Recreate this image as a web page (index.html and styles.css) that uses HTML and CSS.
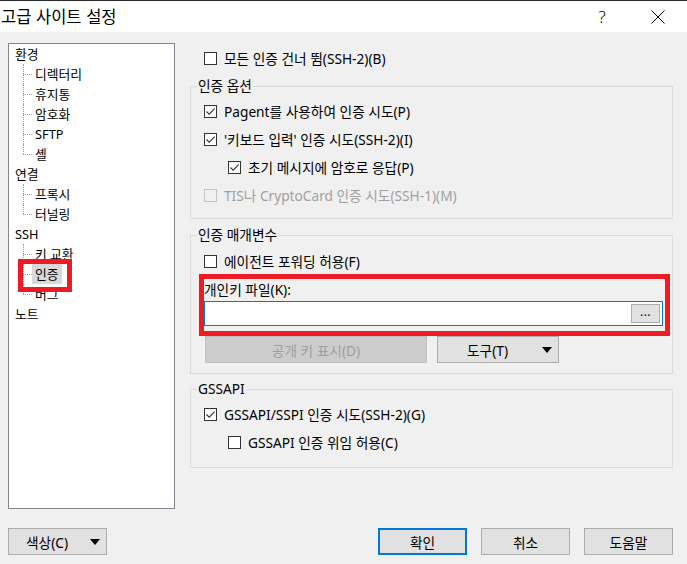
FILE: index.html
```html
<!DOCTYPE html>
<html lang="ko">
<head>
<meta charset="utf-8">
<title>고급 사이트 설정</title>
<link rel="stylesheet" href="styles.css">
</head>
<body>
<div class="window">
  <div class="titlebar">
    <span class="title">고급 사이트 설정</span>
    <span class="help">?</span>
    <svg class="close" width="14" height="14" viewBox="0 0 14 14"><path d="M0.5 0.5 L13.5 13.5 M13.5 0.5 L0.5 13.5" stroke="#000" stroke-width="1" fill="none"/></svg>
  </div>

  <div class="content">
    <div class="tree">
      <div class="node">환경</div>
      <div class="node child">디렉터리</div>
      <div class="node child">휴지통</div>
      <div class="node child">암호화</div>
      <div class="node child">SFTP</div>
      <div class="node child last">셸</div>
      <div class="node">연결</div>
      <div class="node child">프록시</div>
      <div class="node child last">터널링</div>
      <div class="node">SSH</div>
      <div class="node child">키 교환</div>
      <div class="node child"><span class="sel">인증</span></div>
      <div class="node child last">버그</div>
      <div class="node">노트</div>
    </div>

    <div class="panel">
      <div class="cb-row top">
        <span class="box"></span><span>모든 인증 건너 뜀(SSH-2)(B)</span>
      </div>

      <fieldset class="group g1">
        <legend>인증 옵션</legend>
        <div class="group-body">
          <div class="cb-row"><span class="box"><svg viewBox="0 0 11 11" width="11" height="11"><path d="M1.5 5.5 L4.2 8.2 L9.6 2.6" stroke="#333" stroke-width="1.1" fill="none"/></svg></span><span>Pagent를 사용하여 인증 시도(P)</span></div>
          <div class="cb-row"><span class="box"><svg viewBox="0 0 11 11" width="11" height="11"><path d="M1.5 5.5 L4.2 8.2 L9.6 2.6" stroke="#333" stroke-width="1.1" fill="none"/></svg></span><span>'키보드 입력' 인증 시도(SSH-2)(I)</span></div>
          <div class="cb-row indent"><span class="box"><svg viewBox="0 0 11 11" width="11" height="11"><path d="M1.5 5.5 L4.2 8.2 L9.6 2.6" stroke="#333" stroke-width="1.1" fill="none"/></svg></span><span>초기 메시지에 암호로 응답(P)</span></div>
          <div class="cb-row disabled"><span class="box"></span><span>TIS나 CryptoCard 인증 시도(SSH-1)(M)</span></div>
        </div>
      </fieldset>

      <fieldset class="group g2">
        <legend>인증 매개변수</legend>
        <div class="group-body">
          <div class="cb-row"><span class="box"></span><span>에이전트 포워딩 허용(F)</span></div>
          <div class="field-label">개인키 파일(K):</div>
          <div class="input">
            <span class="browse">...</span>
          </div>
          <div class="btn-row">
            <span class="btn disabled-btn wide">공개 키 표시(D)</span>
            <span class="btn drop tools"><span class="btn-text">도구(T)</span><svg class="arrow" width="10" height="6" viewBox="0 0 10 6"><path d="M0 0 H10 L5 6 Z" fill="#000"/></svg></span>
          </div>
        </div>
      </fieldset>

      <fieldset class="group g3">
        <legend>GSSAPI</legend>
        <div class="group-body">
          <div class="cb-row"><span class="box"><svg viewBox="0 0 11 11" width="11" height="11"><path d="M1.5 5.5 L4.2 8.2 L9.6 2.6" stroke="#333" stroke-width="1.1" fill="none"/></svg></span><span>GSSAPI/SSPI 인증 시도(SSH-2)(G)</span></div>
          <div class="cb-row indent"><span class="box"></span><span>GSSAPI 인증 위임 허용(C)</span></div>
        </div>
      </fieldset>
    </div>
  </div>

  <div class="footer">
    <span class="btn drop color"><span class="btn-text">색상(C)</span><svg class="arrow" width="10" height="6" viewBox="0 0 10 6"><path d="M0 0 H10 L5 6 Z" fill="#000"/></svg></span>
    <span class="btn ok">확인</span>
    <span class="btn">취소</span>
    <span class="btn">도움말</span>
  </div>

  <div class="mark mark-tree"></div>
  <div class="mark mark-key"></div>
</div>
</body>
</html>
```

FILE: styles.css
```css
* { box-sizing: border-box; }
html, body { margin: 0; padding: 0; }
body {
  width: 687px;
  height: 564px;
  overflow: hidden;
  background: #f0f0f0;
  font-family: "Noto Sans", "Noto Sans CJK KR", sans-serif;
  font-size: 13.7px;
  color: #000;
}
.window {
  position: relative;
  width: 687px;
  height: 564px;
  border-top: 1px solid #2a2a2a;
}
.titlebar {
  height: 31px;
  background: #fff;
  display: flex;
  align-items: center;
}
.title {
  font-family: "Noto Sans CJK KR", sans-serif;
  font-size: 16.5px;
  line-height: 31px;
  margin-left: 1px;
  flex: 1;
}
.help {
  width: 20px;
  text-align: center;
  font-family: "Noto Sans", sans-serif;
  font-size: 17px;
  font-weight: 300;
  line-height: 31px;
}
.close {
  margin-left: 39px;
  margin-right: 22px;
  display: block;
}

.content {
  display: flex;
  gap: 15px;
  margin-top: 11px;
  padding-left: 8px;
  height: 466px;
}
.tree {
  width: 167px;
  height: 466px;
  border: 1px solid #828790;
  background: #fff;
  font-size: 12.8px;
}
.node {
  height: 20px;
  line-height: 20px;
  padding-left: 6px;
  white-space: nowrap;
}
.child {
  position: relative;
  padding-left: 26px;
}
.child::before {
  content: "";
  position: absolute;
  left: 14px;
  top: 0;
  height: 20px;
  border-left: 1px dotted #a0a0a0;
}
.child.last::before { height: 10px; }
.child::after {
  content: "";
  position: absolute;
  left: 14px;
  top: 10px;
  width: 9px;
  border-top: 1px dotted #a0a0a0;
}
.sel {
  display: inline-block;
  background: #d9d9d9;
  height: 20px;
  padding: 0 3px;
  margin-left: -3px;
}

.panel {
  width: 483px;
  display: flex;
  flex-direction: column;
}
.cb-row {
  display: flex;
  align-items: center;
  gap: 7px;
  height: 28px;
  white-space: nowrap;
}
.cb-row.top {
  height: 20px;
  margin-top: 5px;
  padding-left: 14px;
}
.cb-row.indent { padding-left: 24px; }
.box {
  width: 13px;
  height: 13px;
  flex: none;
  border: 1px solid #333;
  background: #fff;
  display: flex;
  align-items: center;
  justify-content: center;
}
.box svg { display: block; }
.cb-row.disabled { color: #a0a0a0; }
.cb-row.disabled .box { border-color: #c4c4c4; background: transparent; }

.group {
  margin: 0;
  padding: 0;
  border: 1px solid #dcdcdc;
  min-width: 0;
}
.group legend {
  margin-left: 6px;
  padding: 0 1px;
  line-height: 16px;
  height: 16px;
}
.group-body { padding-left: 13px; }
.g1 { margin-top: 10px; }
.g1 .group-body { padding-top: 3px; padding-bottom: 9px; }
.g2 { margin-top: 8px; }
.g2 .group-body { padding-top: 4px; padding-bottom: 10px; }
.g3 { margin-top: 7px; }
.g3 .group-body { padding-top: 3px; padding-bottom: 11px; }

.field-label {
  margin-top: 7px;
  height: 16px;
  line-height: 16px;
}
.input {
  margin-top: 3px;
  width: 459px;
  height: 25px;
  border: 1px solid #0078d7;
  background: #fff;
  display: flex;
  justify-content: flex-end;
  align-items: center;
  padding-right: 2px;
}
.browse {
  width: 29px;
  height: 19px;
  background: #e1e1e1;
  border: 1px solid #adadad;
  font-size: 12px;
  line-height: 14px;
  text-align: center;
  letter-spacing: 0.5px;
}
.btn-row {
  margin-top: 10px;
  display: flex;
  gap: 10px;
  padding-left: 1px;
}
.btn {
  height: 27px;
  width: 89px;
  background: #e1e1e1;
  border: 1px solid #adadad;
  display: flex;
  align-items: center;
  justify-content: center;
  white-space: nowrap;
}
.disabled-btn {
  background: #cccccc;
  border-color: #bfbfbf;
  color: #a0a0a0;
}
.wide { width: 222px; }
.drop { position: relative; justify-content: flex-start; }
.tools { width: 122px; }
.tools .btn-text { margin-left: 29px; }
.tools .arrow { margin-left: auto; margin-right: 6px; }
.arrow { display: block; }

.footer {
  display: flex;
  align-items: center;
  margin-top: 19px;
  padding: 0 14px 0 8px;
  gap: 14px;
}
.color { width: 99px; }
.color .btn-text { margin-left: 17px; }
.color .arrow { margin-left: auto; margin-right: 6px; }
.ok {
  margin-left: auto;
  border: 2px solid #0078d7;
}

.mark {
  position: absolute;
  border: 5px solid #ed1c24;
}
.mark-tree { left: 18px; top: 258px; width: 54px; height: 33px; }
.mark-key { left: 199px; top: 273px; width: 471px; height: 62px; }
```
